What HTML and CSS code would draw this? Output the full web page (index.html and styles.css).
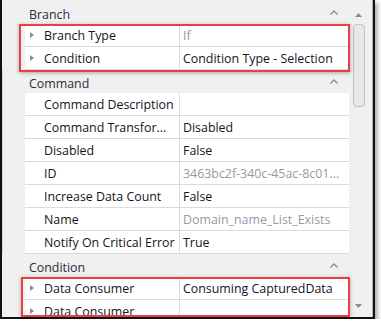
FILE: index.html
```html
<!DOCTYPE html>
<html>

<head>
  <meta name="viewport" content="width=device-width, initial-scale=1">
  <link rel="stylesheet" href="styles.css">
</head>

<body>
  <div class="frame">
    <div class="grid">
      <div class="list">
        <section class="cat">
          <div class="cat-head">
            <span>Branch</span>
            <svg class="chev" viewBox="0 0 8 5"><polyline points="0.5,4.5 4,1 7.5,4.5" /></svg>
          </div>
          <div class="row">
            <span class="name"><i class="tri"></i>Branch Type</span>
            <span class="value value--muted">If</span>
          </div>
          <div class="row">
            <span class="name"><i class="tri"></i>Condition</span>
            <span class="value">Condition Type - Selection</span>
          </div>
        </section>

        <section class="cat cat--focus">
          <div class="cat-head">
            <span>Command</span>
            <svg class="chev" viewBox="0 0 8 5"><polyline points="0.5,4.5 4,1 7.5,4.5" /></svg>
          </div>
          <div class="row">
            <span class="name">Command Description</span>
            <span class="value"></span>
          </div>
          <div class="row">
            <span class="name">Command Transfor...</span>
            <span class="value">Disabled</span>
          </div>
          <div class="row">
            <span class="name">Disabled</span>
            <span class="value">False</span>
          </div>
          <div class="row">
            <span class="name">ID</span>
            <span class="value value--muted">3463bc2f-340c-45ac-8c01...</span>
          </div>
          <div class="row">
            <span class="name">Increase Data Count</span>
            <span class="value">False</span>
          </div>
          <div class="row">
            <span class="name">Name</span>
            <span class="value value--muted">Domain_name_List_Exists</span>
          </div>
          <div class="row">
            <span class="name">Notify On Critical Error</span>
            <span class="value">True</span>
          </div>
        </section>

        <section class="cat">
          <div class="cat-head">
            <span>Condition</span>
            <svg class="chev" viewBox="0 0 8 5"><polyline points="0.5,4.5 4,1 7.5,4.5" /></svg>
          </div>
          <div class="row">
            <span class="name"><i class="tri"></i>Data Consumer</span>
            <span class="value">Consuming CapturedData</span>
          </div>
          <div class="row">
            <span class="name"><i class="tri"></i>Data Consumer</span>
            <span class="value"></span>
          </div>
        </section>
      </div>

      <div class="scroll">
        <svg class="arrow" viewBox="0 0 7 4"><polygon points="0,4 3.5,0 7,4" /></svg>
        <div class="thumb"></div>
        <div class="track"></div>
        <svg class="arrow" viewBox="0 0 7 4"><polygon points="0,0 7,0 3.5,4" /></svg>
      </div>
    </div>

    <!-- Annotation boxes drawn over the grid. -->
    <div class="mark mark--branch"></div>
    <div class="mark mark--condition"></div>
  </div>
</body>

</html>
```

FILE: styles.css
```css
:root {
  --panel: hsl(0, 0%, 94%);
  --line: hsl(0, 0%, 86%);
  --text: hsl(240, 30%, 11%);
  --muted: hsl(240, 6%, 62%);
  --mark: hsl(357, 82%, 58%);
}

html,
body {
  margin: 0;
  background: #fff;
}

body {
  font-family: "Open Sans", "Noto Sans", sans-serif;
  font-size: 12.4px;
  color: var(--text);
}

.frame {
  position: relative;
  width: 371px;
  height: 317px;
  border: 2px solid #111;
  border-top: 0;
  overflow: hidden;
  box-shadow: 3px 3px 4px rgba(0, 0, 0, 0.3);
}

.grid {
  display: flex;
  height: 100%;
  background: var(--panel);
  border-right: 1px solid hsl(0, 0%, 70%);
  padding-top: 1px;
  box-sizing: border-box;
}

.list {
  width: 347px;
}

.cat {
  padding-left: 5px;
  border-left: 1px solid transparent;
}

.cat--focus {
  border-left-color: hsl(0, 0%, 84%);
}

.cat-head {
  display: flex;
  align-items: center;
  justify-content: space-between;
  height: 20px;
  padding: 3px 11px 0 21px;
  color: hsl(240, 12%, 20%);
}

.chev {
  width: 8px;
  height: 5px;
  margin-top: -3px;
  fill: none;
  stroke: hsl(0, 0%, 55%);
  stroke-width: 1.3;
}

.row {
  display: flex;
  height: 20px;
  padding-top: 2px;
  margin-left: 17px;
  background: #fff;
  border-bottom: 1px solid var(--line);
  line-height: 20px;
}

.name {
  display: flex;
  align-items: center;
  width: 135px;
  margin-top: -2px;
  padding: 2px 0 0 19px;
  border-right: 1px solid var(--line);
  white-space: nowrap;
}

.tri {
  width: 0;
  height: 0;
  margin: -3px 10px 0 -14px;
  border-left: 4px solid hsl(0, 0%, 55%);
  border-top: 3.5px solid transparent;
  border-bottom: 3.5px solid transparent;
}

.value {
  padding-left: 3px;
  white-space: nowrap;
}

.value--muted {
  color: var(--muted);
}

.scroll {
  display: flex;
  flex-direction: column;
  align-items: center;
  width: 19px;
  padding-top: 12px;
}

.arrow {
  width: 7px;
  height: 4px;
  fill: hsl(0, 0%, 55%);
}

.thumb {
  width: 10px;
  height: 81px;
  margin-top: 7px;
  background: hsl(0, 0%, 91%);
  border: 1px solid hsl(0, 0%, 75%);
  border-radius: 4px;
}

.track {
  flex: 1;
}

.scroll .arrow:last-child {
  margin-bottom: 9px;
}

.mark {
  position: absolute;
  border: 2px solid var(--mark);
  box-shadow: 0 1px 4px rgba(0, 0, 0, 0.3);
}

.mark--branch {
  left: 17px;
  top: 24px;
  width: 327px;
  height: 44px;
}

.mark--condition {
  left: 19px;
  top: 277px;
  width: 325px;
  height: 36px;
}
```
